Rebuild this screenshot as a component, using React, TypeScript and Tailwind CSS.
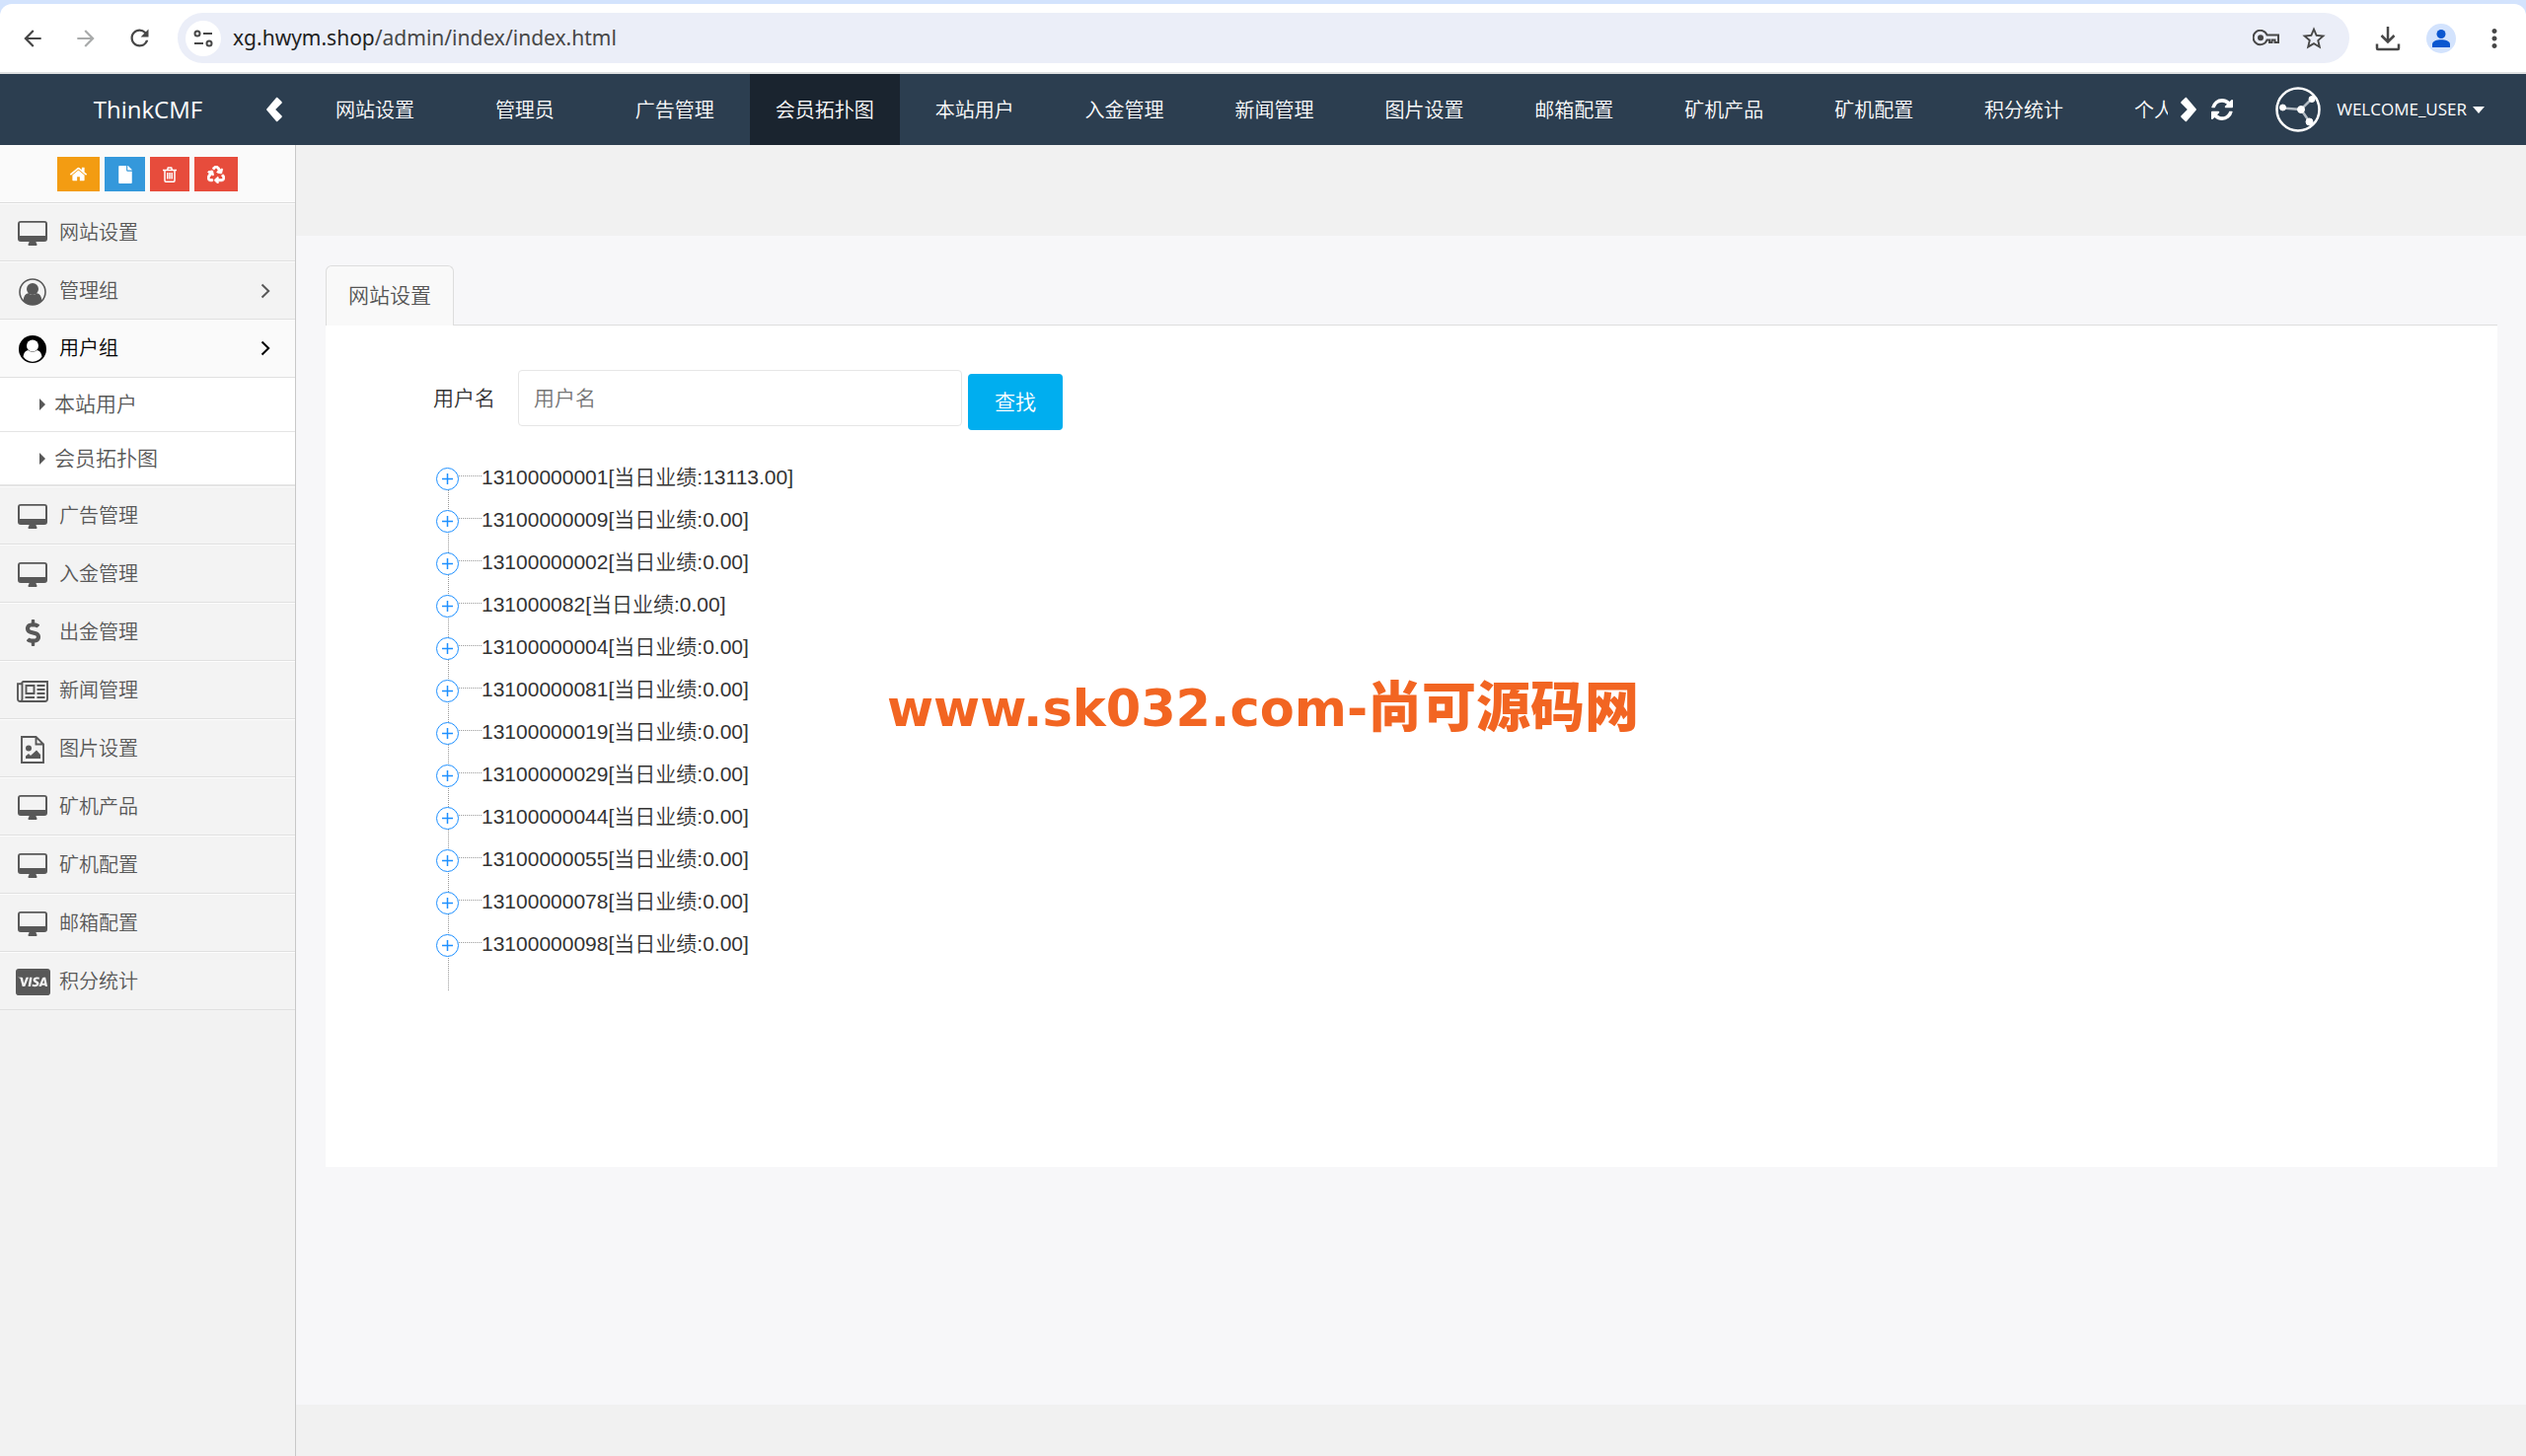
import type { ReactNode } from "react";
import { FaCcVisa, FaDollarSign, FaFile, FaRecycle } from "react-icons/fa";
import { MdArrowBack, MdArrowForward, MdMoreVert, MdRefresh, MdStarBorder } from "react-icons/md";

const topTabs = [
  "网站设置",
  "管理员",
  "广告管理",
  "会员拓扑图",
  "本站用户",
  "入金管理",
  "新闻管理",
  "图片设置",
  "邮箱配置",
  "矿机产品",
  "矿机配置",
  "积分统计",
  "个人资料",
];

const members = [
  { phone: "13100000001", amount: "13113.00" },
  { phone: "13100000009", amount: "0.00" },
  { phone: "13100000002", amount: "0.00" },
  { phone: "131000082", amount: "0.00" },
  { phone: "13100000004", amount: "0.00" },
  { phone: "13100000081", amount: "0.00" },
  { phone: "13100000019", amount: "0.00" },
  { phone: "13100000029", amount: "0.00" },
  { phone: "13100000044", amount: "0.00" },
  { phone: "13100000055", amount: "0.00" },
  { phone: "13100000078", amount: "0.00" },
  { phone: "13100000098", amount: "0.00" },
];

function DesktopIcon() {
  return (
    <svg viewBox="0 0 30 25" className="w-[30px] h-[25px]" fill="currentColor">
      <path fillRule="evenodd" d="M3 0h24a3 3 0 0 1 3 3v15a3 3 0 0 1-3 3h-8.500c0 1.500 1 2 1 3 0 .6-.4 1-1 1h-7c-.6 0-1-.4-1-1 0-1 1-1.500 1-3H3a3 3 0 0 1-3-3V3a3 3 0 0 1 3-3zM2 2.500V15h26V2.500a.8.8 0 0 0-.8-.8H2.800a.8.8 0 0 0-.8.8z" />
    </svg>
  );
}

function UserOutlineIcon() {
  return (
    <svg viewBox="0 0 28 28" className="size-7">
      <circle cx="14" cy="14" r="13" fill="none" stroke="currentColor" strokeWidth="1.600" />
      <circle cx="14" cy="11" r="6" fill="currentColor" />
      <path d="M4.500 22.500c.6-4 2-6.700 5-7.300a6.500 6.500 0 0 0 9 0c3 .6 4.400 3.300 5 7.300A13 13 0 0 1 14 27a13 13 0 0 1-9.500-4.500z" fill="currentColor" />
    </svg>
  );
}

function UserSolidIcon() {
  return (
    <svg viewBox="0 0 28 28" className="size-7">
      <circle cx="14" cy="14" r="14" fill="currentColor" />
      <path d="M4.500 21.500c.6-3.600 2-5.900 5-6.500a6.500 6.500 0 0 0 9 0c3 .6 4.400 2.900 5 6.500A12.500 12.500 0 0 1 14 26.800a12.500 12.500 0 0 1-9.500-5.300z" fill="#fff" />
      <circle cx="14" cy="10.500" r="6" fill="#fff" />
    </svg>
  );
}

function NewspaperIcon() {
  return (
    <svg viewBox="0 0 32 22" className="w-8 h-[22px]" fill="none" stroke="currentColor" strokeWidth="1.900">
      <path d="M5.500 1H31v17.500q0 2.500-2.500 2.500H3.500Q1 21 1 18.500V3.200h4.500M5.500 1v17.500q0 2.500-2 2.500M9.500 5h8v8h-8zM20.500 5h8M20.500 9h8M20.500 13h8M8.500 17h9.500M20.500 17h8" />
    </svg>
  );
}

function FileImageIcon() {
  return (
    <svg viewBox="0 0 24 28" className="w-6 h-7" fill="none" stroke="currentColor" strokeWidth="1.900">
      <path d="M1 1h14.500L23 8.500V27H1zM15.500 1v7.500H23" />
      <path d="M5 20.500 8 18l2 2 6-5.500 4 4.500v4H5z" fill="currentColor" stroke="none" />
      <circle cx="8" cy="12.500" r="3" fill="currentColor" stroke="none" />
    </svg>
  );
}

function AngleRight() {
  return (
    <svg viewBox="0 0 10 16" className="w-[10px] h-4" fill="none" stroke="currentColor" strokeWidth="2">
      <path d="M1.500 1.500 8.200 8l-6.700 6.500" />
    </svg>
  );
}

function Chevron({ left }: { left?: boolean }) {
  return (
    <svg viewBox="0 0 16 26" className="w-4 h-[26px]" fill="currentColor">
      <path d={left ? "M11 .7 15.500 5l.4 1.200L9.200 13l6.700 6.800-.4 1.200L11 25.300h-.8L.2 13.500v-1L10.200.7z" : "M5 .7.5 5 .1 6.200 6.800 13 .1 19.800.5 21 5 25.300h.8l10-11.800v-1L5.800.7z"} />
    </svg>
  );
}

function RefreshIcon() {
  return (
    <svg viewBox="128 128 1536 1536" className="size-[22px]" fill="currentColor">
      <path d="M1639 1056q0 5-1 7-64 268-268 434.500t-478 166.500q-146 0-282.500-55t-243.500-157l-129 129q-19 19-45 19t-45-19-19-45v-448q0-26 19-45t45-19h448q26 0 45 19t19 45-19 45l-137 137q71 66 161 102t187 36q134 0 250-65t186-179q11-17 53-117 8-23 30-23h192q13 0 22.500 9.500t9.500 22.500zm25-800v448q0 26-19 45t-45 19h-448q-26 0-45-19t-19-45 19-45l138-138q-148-137-349-137-134 0-250 65t-186 179q-11 17-53 117-8 23-30 23h-199q-13 0-22.500-9.500t-9.500-22.500v-7q65-268 270-434.500t480-166.500q146 0 284 55.500t245 156.500l130-129q19-19 45-19t45 19 19 45z" />
    </svg>
  );
}

function HomeIcon() {
  return (
    <svg viewBox="0 0 1792 1792" className="size-[19px]" fill="currentColor">
      <path d="M1472 992v480q0 26-19 45t-45 19h-384v-384h-256v384h-384q-26 0-45-19t-19-45v-480q0-1 .5-3t.5-3l575-474 575 474q1 2 1 6zm223-69l-62 74q-8 9-21 11h-3q-13 0-21-7l-692-577-692 577q-12 8-24 7-13-2-21-11l-62-74q-8-10-7-23.500t11-21.500l719-599q32-26 76-26t76 26l244 204v-195q0-14 9-23t23-9h192q14 0 23 9t9 23v408l219 182q10 8 11 21.500t-7 23.500z" />
    </svg>
  );
}

function TrashIcon() {
  return (
    <svg viewBox="0 0 14 16" className="w-[14px] h-4" fill="none" stroke="currentColor" strokeWidth="1.500">
      <path d="M0 3.500h14M4.500 3.500 5.300 1h3.400l.8 2.500M2 3.500V14c0 .7.400 1.200 1 1.200h8c.6 0 1-.5 1-1.200V3.500M4.800 6v6.500M7 6v6.500M9.200 6v6.500" />
    </svg>
  );
}

function KeyIcon() {
  return (
    <svg viewBox="0 0 28 17" className="w-7 h-[17px]" fill="none" stroke="currentColor" strokeWidth="2">
      <path d="M14.500 5.500H26v7.500h-3.500v-2.500h-3V13h-2.500v-2.500h-2.500a7.200 7.200 0 1 1 0-5z" />
      <circle cx="8" cy="8.200" r="3" fill="currentColor" stroke="none" />
    </svg>
  );
}

function DownloadIcon() {
  return (
    <svg viewBox="0 0 26 26" className="size-[26px]" fill="none" stroke="currentColor" strokeWidth="2.500">
      <path d="M13 1v15M6.500 10 13 16.500 19.500 10M2 18.500V23q0 1 1 1h20q1 0 1-1v-4.500" />
    </svg>
  );
}

function TuneIcon() {
  return (
    <svg viewBox="0 0 20 18" className="w-5 h-[18px]" fill="none" stroke="currentColor" strokeWidth="2">
      <circle cx="4" cy="4" r="2.500" />
      <path d="M10 4h9M1 14h9" />
      <circle cx="16" cy="14" r="2.500" />
    </svg>
  );
}

function AvatarIcon() {
  return (
    <svg viewBox="0 0 46 46" className="size-[46px]" stroke="#fff" fill="#fff">
      <circle cx="23" cy="23" r="21.500" fill="none" strokeWidth="2.500" />
      <path d="M7 21.500 26 23 37 12M26 23l9 13" fill="none" stroke="#b4bcc4" strokeWidth="2.500" />
      <circle cx="7.500" cy="21" r="3" />
      <circle cx="26" cy="23" r="3.500" />
      <circle cx="37" cy="12.500" r="3" />
      <circle cx="34.500" cy="35.500" r="3.500" />
    </svg>
  );
}

function BrowserBar() {
  return (
    <div className="bg-[#d3e3fd] pt-1">
      <div className="flex h-[71px] items-center rounded-t-xl border-b-2 border-[#dfe1e2] bg-white text-[#474747]">
        <button aria-label="后退" className="ml-5"><MdArrowBack className="size-[26px]" /></button>
        <button aria-label="前进" className="ml-7 text-[#a9abab]"><MdArrowForward className="size-[26px]" /></button>
        <button aria-label="刷新" className="ml-7"><MdRefresh className="size-[27px]" /></button>
        <div className="ml-[25px] flex h-[51px] flex-1 items-center rounded-full bg-[#ebeef8] pl-2 pr-[22px]">
          <span className="grid size-9 place-items-center rounded-full bg-white"><TuneIcon /></span>
          <p className="ml-3 flex-1 font-['Noto_Sans',sans-serif] text-[21px] font-normal text-[#474747]">
            <span className="text-[#1f1f1f]">xg.hwym.shop</span>/admin/index/index.html
          </p>
          <KeyIcon />
          <MdStarBorder className="ml-5 size-7" />
        </div>
        <button aria-label="下载" className="ml-[26px]"><DownloadIcon /></button>
        <button aria-label="用户" className="ml-[26px] grid size-[30px] place-items-center rounded-full bg-[#d3e3fd]">
          <svg viewBox="0 0 18 18" className="size-[18px]" fill="#0b57d0">
            <circle cx="9" cy="4.500" r="4.500" />
            <path d="M0 18v-3c0-3.500 5-4.800 9-4.800s9 1.300 9 4.800v3z" />
          </svg>
        </button>
        <button aria-label="菜单" className="ml-6 mr-[17px]"><MdMoreVert className="size-[30px]" /></button>
      </div>
    </div>
  );
}

function TopNav() {
  return (
    <header className="flex h-[72px] items-center bg-[#2c3e50] text-white">
      <a href="#" className="w-[270px] pl-[30px] text-center font-['Open_Sans',sans-serif] text-[24px] font-normal">ThinkCMF</a>
      <button aria-label="向左"><Chevron left /></button>
      <nav className="ml-[18px] flex-1 overflow-hidden">
        <ul className="-mr-1.5 flex">
          {topTabs.map((tab) => (
            <li key={tab} className="w-[8%] shrink-0">
              <a
                href="#"
                className={
                  tab === "会员拓扑图"
                    ? "block h-[72px] whitespace-nowrap bg-[#1a242f] text-center leading-[74px]"
                    : "block h-[72px] whitespace-nowrap text-center leading-[74px]"
                }
              >
                {tab}
              </a>
            </li>
          ))}
        </ul>
      </nav>
      <button aria-label="向右" className="ml-[13px]"><Chevron /></button>
      <button aria-label="刷新页面" className="ml-[15px]"><RefreshIcon /></button>
      <button className="ml-[43px] mr-[42px] flex items-center">
        <AvatarIcon />
        <span className="ml-4 font-['Open_Sans',sans-serif] text-[17px] font-normal leading-[28px]">WELCOME_USER</span>
        <svg viewBox="0 0 12 7" className="ml-1.5 h-[7px] w-3" fill="currentColor"><path d="M0 0h12L6 7z" /></svg>
      </button>
    </header>
  );
}

function MenuItem({ icon, label, arrow, active }: { icon: ReactNode; label: string; arrow?: boolean; active?: boolean }) {
  return (
    <a
      href="#"
      className={
        active
          ? "flex h-[59px] items-center border-b border-[#e0e0e0] bg-[#fafafa] pr-[25px] text-black"
          : "flex h-[59px] items-center border-b border-b-[#e0e0e0] border-t border-t-[#fcfcfc] bg-[#f3f3f3] pr-[25px]"
      }
    >
      <span className="mt-0.5 grid w-[66px] shrink-0 place-items-center">{icon}</span>
      <span className="-ml-1.5 flex-1 leading-[58px]">{label}</span>
      {arrow && <AngleRight />}
    </a>
  );
}

function SubItem({ label, last }: { label: string; last?: boolean }) {
  return (
    <a
      href="#"
      className={
        last
          ? "flex h-[55px] items-center border-b-2 border-[#e4e4e4] bg-white pl-10 text-[21px]"
          : "flex h-[55px] items-center border-b border-[#e4e4e4] bg-white pl-10 text-[21px]"
      }
    >
      <svg viewBox="0 0 6 12" className="h-3 w-1.5" fill="currentColor"><path d="M0 0l6 6-6 6z" /></svg>
      <span className="ml-[9px]">{label}</span>
    </a>
  );
}

function Sidebar() {
  return (
    <aside className="w-[300px] shrink-0 border-r border-[#c8c8c8] bg-[#f2f2f2] text-[#585858]">
      <div className="flex h-[59px] justify-center gap-[5px] border-b border-[#dddddd] bg-[#fafafa] pt-3 text-white">
        <button aria-label="首页" className="grid h-[35px] w-[43px] place-items-center bg-[#f39c12]"><HomeIcon /></button>
        <button aria-label="文件" className="grid h-[35px] w-[41px] place-items-center bg-[#3498db]"><FaFile className="size-[18px]" /></button>
        <button aria-label="删除" className="grid h-[35px] w-10 place-items-center bg-[#e74c3c]"><TrashIcon /></button>
        <button aria-label="回收站" className="grid h-[35px] w-11 place-items-center bg-[#e74c3c]"><FaRecycle className="size-[18px] stroke-current stroke-[24px]" /></button>
      </div>
      <nav>
        <MenuItem icon={<DesktopIcon />} label="网站设置" />
        <MenuItem icon={<UserOutlineIcon />} label="管理组" arrow />
        <MenuItem icon={<UserSolidIcon />} label="用户组" arrow active />
        <SubItem label="本站用户" />
        <SubItem label="会员拓扑图" last />
        <MenuItem icon={<DesktopIcon />} label="广告管理" />
        <MenuItem icon={<DesktopIcon />} label="入金管理" />
        <MenuItem icon={<FaDollarSign className="size-[27px]" />} label="出金管理" />
        <MenuItem icon={<NewspaperIcon />} label="新闻管理" />
        <MenuItem icon={<FileImageIcon />} label="图片设置" />
        <MenuItem icon={<DesktopIcon />} label="矿机产品" />
        <MenuItem icon={<DesktopIcon />} label="矿机配置" />
        <MenuItem icon={<DesktopIcon />} label="邮箱配置" />
        <MenuItem icon={<FaCcVisa className="size-[35px]" />} label="积分统计" />
      </nav>
    </aside>
  );
}

function MemberTree() {
  return (
    <ul className="relative pb-6 text-[#333333]">
      <li aria-hidden="true" className="absolute bottom-0 left-3 top-3 border-l border-dotted border-[#999999]" />
      {members.map((m) => (
        <li key={m.phone} className="relative flex h-[43px] items-start">
          <button aria-label="展开" className="mt-2.5 grid size-[23px] place-items-center rounded-full border border-[#1e90ff] bg-white text-[#1e90ff]">
            <svg viewBox="0 0 11 11" className="size-[11px]" stroke="currentColor" strokeWidth="1.500"><path d="M5.500 0v11M0 5.500h11" /></svg>
          </button>
          <span className="mt-[18px] w-[23px] border-t border-dotted border-[#999999]" />
          <span className="leading-10">{m.phone}[当日业绩:{m.amount}]</span>
        </li>
      ))}
    </ul>
  );
}

export default function App() {
  return (
    <div className="relative flex min-h-screen flex-col bg-[#f1f1f1] font-['Liberation_Sans','Noto_Sans_CJK_SC',sans-serif] text-[20px] font-[350]">
      <BrowserBar />
      <TopNav />
      <div className="flex flex-1">
        <Sidebar />
        <main className="my-[92px] mb-[52px] flex-1 bg-[#f7f7f9] pl-[30px] pr-[29px] pt-[30px] text-[21px]">
          <div className="flex border-b border-[#dddddd]">
            <a href="#" className="-mb-px rounded-t-md border border-b-0 border-[#dddddd] bg-[#f9f9f9] px-[22px] leading-[60px] text-[#555555]">网站设置</a>
          </div>
          <section className="bg-white pb-[179px] pl-[109px] pt-[45px]">
            <form className="flex items-start">
              <label htmlFor="username" className="leading-[57px] text-[#333333]">用户名</label>
              <input
                id="username"
                type="text"
                placeholder="用户名"
                className="ml-[23px] h-[57px] w-[450px] rounded-sm border border-[#e6e6e6] bg-white px-[15px] placeholder:text-[#757575]"
              />
              <button type="button" className="ml-1.5 mt-1 h-[57px] w-24 rounded-sm bg-[#00aeef] text-white">查找</button>
            </form>
            <div className="ml-[3px] mt-7">
              <MemberTree />
            </div>
          </section>
        </main>
      </div>
      <p className="pointer-events-none absolute left-1/2 top-[672px] -translate-x-1/2 whitespace-nowrap font-['DejaVu_Sans','Noto_Sans_CJK_SC',sans-serif] text-[51px] font-bold leading-[80px] text-[#f26522]">
        www.sk032.com-<span className="font-['Noto_Sans_CJK_SC',sans-serif] text-[55px] font-black">尚可源码网</span>
      </p>
    </div>
  );
}
